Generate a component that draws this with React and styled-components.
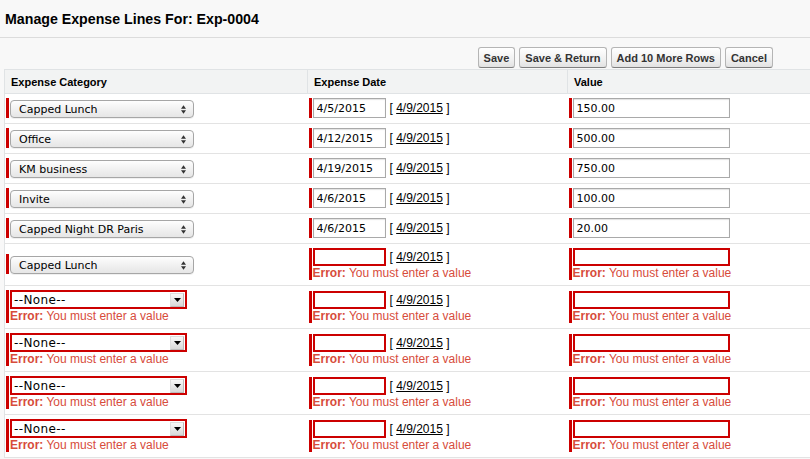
import React from 'react';
import styled, { createGlobalStyle } from 'styled-components';

const GlobalStyle = createGlobalStyle`
  body {
    margin: 0;
    background: #f8f8f8;
    font-family: "Liberation Sans", Arial, sans-serif;
    overflow: hidden;
  }
`;

const lines = [
  { cat: 'Capped Lunch', date: '4/5/2015', value: '150.00' },
  { cat: 'Office', date: '4/12/2015', value: '500.00' },
  { cat: 'KM business', date: '4/19/2015', value: '750.00' },
  { cat: 'Invite', date: '4/6/2015', value: '100.00' },
  { cat: 'Capped Night DR Paris', date: '4/6/2015', value: '20.00' },
  { cat: 'Capped Lunch', date: '', value: '' },
  { cat: '', date: '', value: '' },
  { cat: '', date: '', value: '' },
  { cat: '', date: '', value: '' },
  { cat: '', date: '', value: '' },
];

const App = () => {
  return (
    <Page>
      <GlobalStyle />
      <TitleBar>
        <Title>Manage Expense Lines For: Exp-0004</Title>
      </TitleBar>
      <ButtonBar>
        <Btn>Save</Btn>
        <Btn>Save &amp; Return</Btn>
        <Btn>Add 10 More Rows</Btn>
        <Btn>Cancel</Btn>
      </ButtonBar>
      <Table>
        <colgroup>
          <col style={{ width: 303 }} />
          <col style={{ width: 260 }} />
          <col />
        </colgroup>
        <thead>
          <tr>
            <Th>Expense Category</Th>
            <Th>Expense Date</Th>
            <Th>Value</Th>
          </tr>
        </thead>
        <tbody>
          {lines.map((line, i) => (
            <tr key={i}>
              <Td>
                {line.cat ? (
                  <Required>
                    <MacSelect>
                      <span>{line.cat}</span>
                      <UpDown viewBox="0 0 6 10">
                        <path d="M0 4 L3 0 L6 4 Z M0 6 L3 10 L6 6 Z" fill="#333" />
                      </UpDown>
                    </MacSelect>
                  </Required>
                ) : (
                  <Required>
                    <div>
                      <PlainSelect>
                        <span>--None--</span>
                        <DropBtn>
                          <svg width="7" height="4" viewBox="0 0 7 4">
                            <path d="M0 0 L7 0 L3.5 4 Z" fill="#000" />
                          </svg>
                        </DropBtn>
                      </PlainSelect>
                      <ErrorMsg>
                        <b>Error:</b> You must enter a value
                      </ErrorMsg>
                    </div>
                  </Required>
                )}
              </Td>
              <Td>
                <Required>
                  <div>
                    <DateLine>
                      <TextInput readOnly defaultValue={line.date} error={!line.date} w={73} />
                      <DateLink>
                        [ <a>4/9/2015</a> ]
                      </DateLink>
                    </DateLine>
                    {!line.date && (
                      <ErrorMsg>
                        <b>Error:</b> You must enter a value
                      </ErrorMsg>
                    )}
                  </div>
                </Required>
              </Td>
              <Td>
                <Required>
                  <div>
                    <TextInput readOnly defaultValue={line.value} error={!line.value} w={157} />
                    {!line.value && (
                      <ErrorMsg>
                        <b>Error:</b> You must enter a value
                      </ErrorMsg>
                    )}
                  </div>
                </Required>
              </Td>
            </tr>
          ))}
        </tbody>
      </Table>
    </Page>
  );
};

export default App;

const Page = styled.div`
  width: 810px;
  height: 459px;
  overflow: hidden;
`;

const TitleBar = styled.div`
  height: 37px;
  display: flex;
  align-items: center;
  padding-left: 5px;
  border-bottom: 1px solid #dcdcdc;
`;

const Title = styled.h1`
  margin: 0;
  font-size: 14.2px;
  font-weight: bold;
  color: #000;
`;

const ButtonBar = styled.div`
  display: flex;
  justify-content: flex-end;
  gap: 4px;
  padding: 9px 37px 0 0;
  height: 22px;
`;

const Btn = styled.button`
  height: 21px;
  padding: 0 5px;
  border: 1px solid #b5b5b5;
  border-bottom-color: #7f7f7f;
  border-radius: 3px;
  background: linear-gradient(#ffffff, #f0f0f0 60%, #e2e2e2);
  font-family: "Liberation Sans", Arial, sans-serif;
  font-size: 11px;
  font-weight: bold;
  color: #333;
  cursor: pointer;
`;

const Table = styled.table`
  margin: 0 0 0 4px;
  width: 820px;
  table-layout: fixed;
  border-collapse: collapse;
  background: #fff;
  border-left: 1px solid #e0e3e5;
`;

const Th = styled.th`
  height: 23px;
  padding: 0 6px;
  text-align: left;
  font-size: 11px;
  font-weight: bold;
  color: #000;
  background: #f2f3f3;
  border: 1px solid #e0e3e5;
  border-left: none;
`;

const Td = styled.td`
  padding: 4px 2px 5px 1px;
  vertical-align: middle;
  border-bottom: 1px solid #e3e3e3;
`;

const Required = styled.div`
  display: flex;
  width: max-content;
  border-left: 3px solid #c00;
  padding-left: 1px;
`;

const MacSelect = styled.div`
  width: 174px;
  height: 16px;
  display: flex;
  align-items: center;
  justify-content: space-between;
  padding: 0 0 0 8px;
  box-sizing: content-box;
  margin: 2px 0 0;
  border: 1px solid #a6a6a6;
  border-radius: 4px;
  background: linear-gradient(#fefefe, #f1f1f1 50%, #e6e6e6);
  box-shadow: 0 1px 0 rgba(0, 0, 0, 0.06);
  font-family: "DejaVu Sans", sans-serif;
  font-size: 11px;
  color: #000;
`;

const UpDown = styled.svg`
  width: 5px;
  height: 9px;
  margin-right: 7px;
`;

const PlainSelect = styled.div`
  width: 173px;
  height: 15px;
  display: flex;
  align-items: center;
  justify-content: space-between;
  border: 2px solid #c00;
  background: #fff;
  font-family: "DejaVu Sans", sans-serif;
  font-size: 12px;
  letter-spacing: 0.4px;
  color: #000;
  span {
    padding-left: 2px;
  }
`;

const DropBtn = styled.div`
  width: 14px;
  height: 14px;
  display: flex;
  align-items: center;
  justify-content: center;
  margin-right: 1px;
  border: 1px solid #bbb;
  border-top-color: #ddd;
  border-left-color: #ddd;
  box-sizing: border-box;
  background: linear-gradient(#f8f8f8, #d8d8d8);
`;

const ErrorMsg = styled.div`
  font-size: 12px;
  line-height: 14px;
  color: #d74c3b;
  white-space: nowrap;
  b {
    font-weight: bold;
  }
`;

const DateLine = styled.div`
  display: flex;
  align-items: center;
`;

const TextInput = styled.input`
  display: block;
  width: ${p => p.w - (p.error ? 4 : 2) - 6}px;
  height: ${p => (p.error ? 14 : 18)}px;
  box-sizing: content-box;
  margin: 0;
  padding: 0 3px;
  border: ${p => (p.error ? '2px solid #c00' : '1px solid #a9a9a9')};
  box-shadow: ${p => (p.error ? 'none' : 'inset 0 1px 1px rgba(0,0,0,0.12)')};
  background: #fff;
  font-family: "DejaVu Sans", sans-serif;
  font-size: 11px;
  color: #000;
  outline: none;
`;

const DateLink = styled.span`
  margin-left: 4px;
  font-size: 12px;
  color: #000;
  white-space: nowrap;
  a {
    text-decoration: underline;
    color: #000;
  }
`;
